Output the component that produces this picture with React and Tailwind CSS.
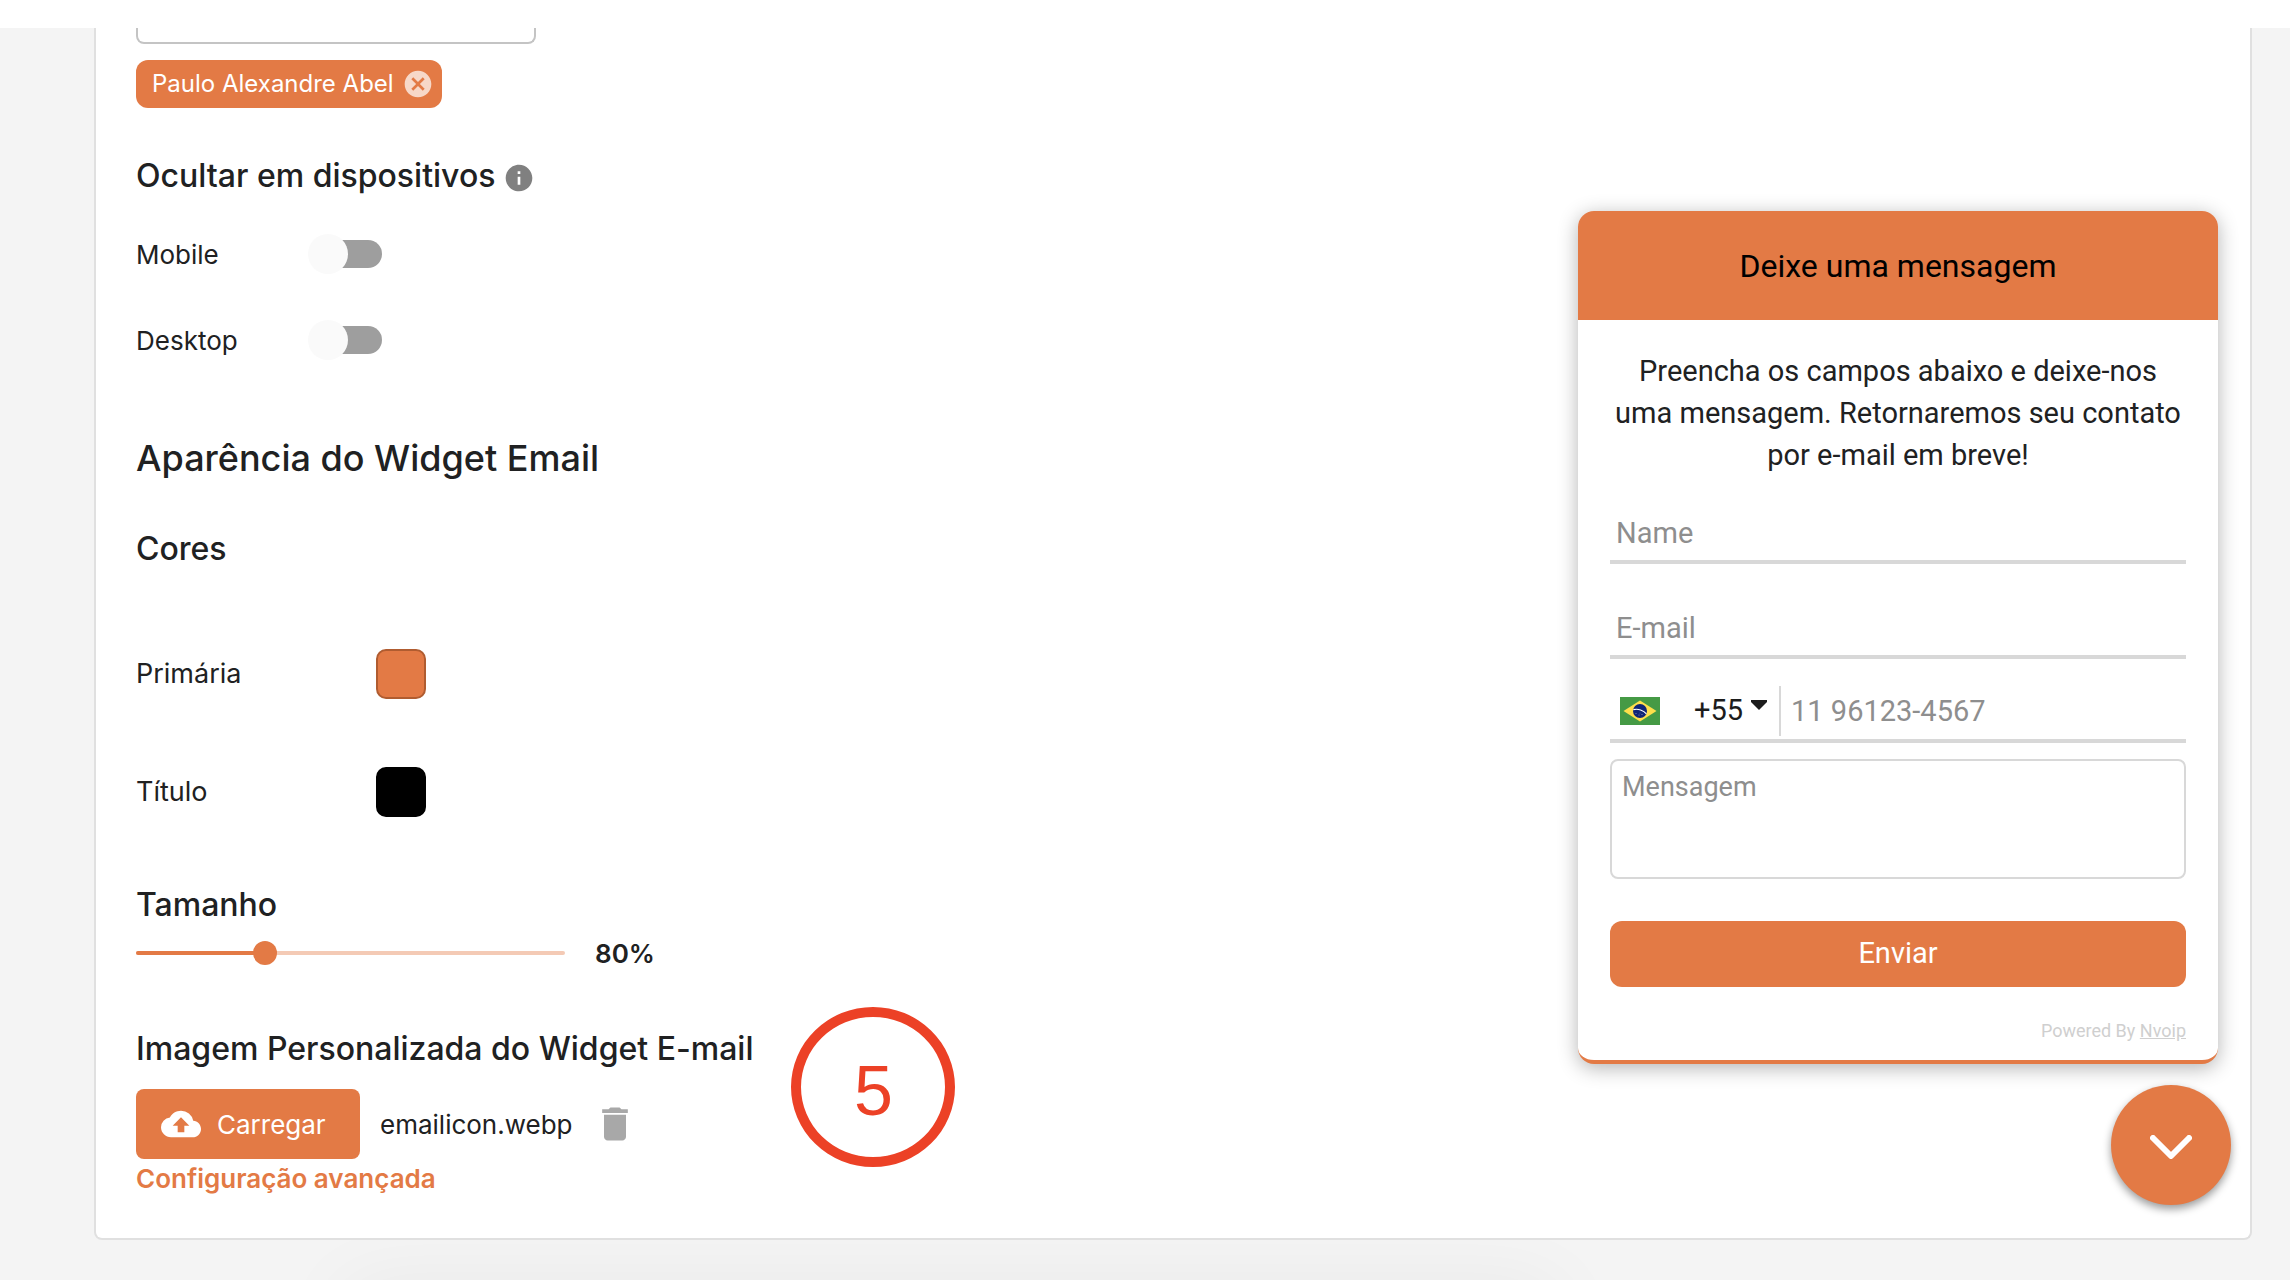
import { useState } from "react";
import { MdCancel, MdInfo, MdCloudUpload, MdDelete } from "react-icons/md";

const devices = ["Mobile", "Desktop"];

function DeviceSwitch({ label }) {
  const [on, setOn] = useState(false);
  const id = `hide-${label.toLowerCase()}`;
  return (
    <div className="flex items-center h-[86px]">
      <label htmlFor={id} className="w-[178px] text-[26px]">{label}</label>
      <span className="relative flex items-center w-[68px] h-10">
        <input
          id={id}
          type="checkbox"
          role="switch"
          checked={on}
          onChange={e => setOn(e.target.checked)}
          className="peer appearance-none w-full h-7 rounded-full bg-[#9e9e9e] checked:bg-[#f1bca2] cursor-pointer"
        />
        <span className="pointer-events-none absolute -left-[6px] size-10 rounded-full bg-[#fafafa] peer-checked:left-[34px] peer-checked:bg-[#e37a45]" />
      </span>
    </div>
  );
}

function ColorRow({ label, value, swatch }) {
  return (
    <div className="flex items-center h-[118px]">
      <span className="w-60 text-[27px]">{label}</span>
      <button type="button" aria-label={`${label} ${value}`} className={`size-[50px] rounded-[10px] border-2 ${swatch}`} />
    </div>
  );
}

function BrazilFlag() {
  return (
    <svg viewBox="0 0 40 28" className="w-10 h-7">
      <rect width="40" height="28" fill="#459a45" />
      <path d="M20 3.500 36.500 14 20 24.500 3.500 14Z" fill="#fedf4b" />
      <circle cx="20" cy="14" r="7" fill="#0f2577" />
      <path d="M13.400 12.600c4.600-1.200 10.200.6 13 4.300" fill="none" stroke="#fff" strokeWidth="1.100" />
      <g fill="#fff">
        <circle cx="16" cy="16.500" r=".4" />
        <circle cx="19" cy="18" r=".4" />
        <circle cx="22" cy="17.500" r=".4" />
        <circle cx="20" cy="16" r=".3" />
      </g>
    </svg>
  );
}

function EmailWidget() {
  return (
    <aside className="w-[640px] flex flex-col items-end mr-8 mb-[33px] font-['Roboto',sans-serif]">
      <form className="w-full rounded-2xl bg-white border-b-4 border-[#e37a45] shadow-[0_4px_20px_rgba(0,0,0,0.3)]" onSubmit={e => e.preventDefault()}>
        <header className="h-[109px] rounded-t-2xl bg-[#e37a45] flex items-center justify-center">
          <h2 className="text-[32px] text-black">Deixe uma mensagem</h2>
        </header>
        <div className="px-8 pt-[30px] pb-[17px] flex flex-col">
          <p className="text-center text-[29px] leading-[42px]">
            Preencha os campos abaixo e deixe-nos uma mensagem. Retornaremos seu contato por e-mail em breve!
          </p>
          <input aria-label="Name" placeholder="Name" className="mt-7 h-[60px] px-[6px] pt-[2px] text-[29px] border-b-4 border-[#d8d8d8] outline-none placeholder:text-[#8e8e8e]" />
          <input aria-label="E-mail" placeholder="E-mail" className="mt-[35px] h-[60px] px-[6px] pt-[2px] text-[29px] border-b-4 border-[#d8d8d8] outline-none placeholder:text-[#8e8e8e]" />
          <div className="mt-6 h-[60px] flex items-center border-b-4 border-[#d8d8d8]">
            <button type="button" className="flex items-center pl-[10px] text-[29px] text-[#1c1c1c]" aria-label="Brasil +55">
              <BrazilFlag />
              <span className="ml-[34px]">+55</span>
              <svg viewBox="0 0 16 10" className="ml-2 w-4 h-[10px] mb-3"><path d="M0 0h16v2L8 10 0 2Z" fill="#1c1c1c" /></svg>
            </button>
            <input aria-label="Telefone" type="tel" placeholder="11 96123-4567" className="ml-3 h-[50px] grow min-w-0 pl-[10px] text-[29px] border-l-2 border-[#d8d8d8] outline-none placeholder:text-[#8e8e8e]" />
          </div>
          <textarea aria-label="Mensagem" placeholder="Mensagem" className="mt-4 h-[120px] px-[10px] py-[6px] text-[27px] rounded-lg border-2 border-[#d8d8d8] outline-none resize-none placeholder:text-[#8e8e8e]" />
          <button type="submit" className="mt-[42px] h-[66px] rounded-xl bg-[#e37a45] text-white text-[29px]">Enviar</button>
          <p className="mt-8 text-right text-[18px] leading-6 text-[#cfcfcf]">
            Powered By <a href="#nvoip" className="underline">Nvoip</a>
          </p>
        </div>
      </form>
      <button type="button" aria-label="Fechar" className="mt-[21px] -mr-[13px] size-[120px] rounded-full bg-[#e37a45] flex items-center justify-center shadow-[0_4px_8px_rgba(0,0,0,0.4)]">
        <svg viewBox="0 0 42 24" className="mt-1 w-[42px] h-6" fill="none" stroke="#fff" strokeWidth="6" strokeLinecap="round" strokeLinejoin="round">
          <path d="M3 3 21 21 39 3" />
        </svg>
      </button>
    </aside>
  );
}

export default function App() {
  const [size, setSize] = useState(30);

  return (
    <div className="min-h-screen bg-[#f4f4f4] font-['Inter',sans-serif] text-[#202122]">
      <div className="h-7 bg-white" />
      <main className="ml-[94px] mr-[38px] flex justify-between items-end bg-white border-2 border-t-0 border-[#e0e0e0] rounded-b-lg">
        <section className="pl-10 pb-[39px] self-start">
          <input aria-label="Agente" className="block w-[400px] h-4 border-2 border-t-0 border-[#c4c4c4] rounded-b-lg outline-none" />
          <div className="mt-4 flex w-fit items-center gap-2 h-12 rounded-xl bg-[#e37a45] pl-4 pr-2 text-white text-[24px]">
            Paulo Alexandre Abel
            <button type="button" aria-label="Remover Paulo Alexandre Abel"><MdCancel className="size-8 text-[#f7d8c8]" /></button>
          </div>

          <h3 className="mt-11 flex items-center gap-2 text-[32px] leading-12 font-medium">
            Ocultar em dispositivos <MdInfo className="size-8 mt-1 text-[#808080]" />
          </h3>
          <div className="mt-[11px]">
            {devices.map(d => <DeviceSwitch key={d} label={d} />)}
          </div>

          <h2 className="mt-[51px] text-[36px] leading-12 font-medium">Aparência do Widget Email</h2>
          <h3 className="mt-[43px] text-[32px] leading-12 font-medium">Cores</h3>
          <div className="mt-[42px]">
            <ColorRow label="Primária" value="#e37a45" swatch="bg-[#e37a45] border-[#b05c30]" />
            <ColorRow label="Título" value="#000000" swatch="bg-black border-black" />
          </div>

          <label htmlFor="size" className="mt-[30px] block w-fit text-[32px] leading-12 font-medium">Tamanho</label>
          <div className="mt-1 flex items-center h-10 gap-[30px]">
            <div className="relative flex items-center w-[429px] h-6">
              <div className="w-full h-1 rounded-full bg-[#f4cab5]">
                <div className="h-1 rounded-full bg-[#e37a45]" style={{ width: `${size}%` }} />
              </div>
              <span className="absolute size-6 -ml-3 rounded-full bg-[#e37a45]" style={{ left: `${size}%` }} />
              <input id="size" type="range" min="0" max="100" value={size} onChange={e => setSize(Number(e.target.value))} className="absolute inset-0 w-full opacity-0 cursor-pointer" />
            </div>
            <output htmlFor="size" className="text-[26px] font-semibold">{50 + size}%</output>
          </div>

          <div className="flex items-end">
            <div className="mt-[52px]">
              <h3 className="text-[32px] leading-12 font-medium">Imagem Personalizada do Widget E-mail</h3>
              <div className="mt-4 flex items-center text-[26px]">
                <button type="button" className="flex items-center gap-4 h-[70px] w-56 pl-[25px] rounded-lg bg-[#e37a45] text-white">
                  <MdCloudUpload className="size-10" /> Carregar
                </button>
                <span className="ml-5">emailicon.webp</span>
                <button type="button" aria-label="Excluir imagem" className="ml-5"><MdDelete className="size-11 text-[#a8a8a8]" /></button>
              </div>
              <a href="#avancada" className="block w-fit text-[26px] leading-10 font-semibold text-[#e37a45]">Configuração avançada</a>
            </div>
            <div className="ml-[38px] mb-8 pt-2 h-40 w-[164px] rounded-[50%] border-[10px] border-[#ec4126] flex items-center justify-center text-[70px] text-[#ec4126] font-['Liberation_Sans',sans-serif]">5</div>
          </div>
        </section>
        <EmailWidget />
      </main>
      <div className="h-10 overflow-hidden">
        <div className="mt-11 ml-[15%] w-[53%] h-40 rounded-xl shadow-[0_0_80px_rgba(0,0,0,0.05)]" />
      </div>
    </div>
  );
}
